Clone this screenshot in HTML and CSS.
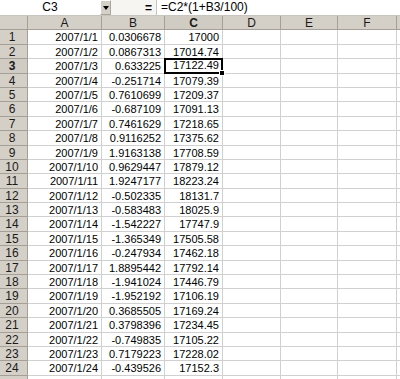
FILE: index.html
```html
<!DOCTYPE html>
<html lang="ja">
<head>
  <meta charset="UTF-8">
  <meta name="viewport" content="width=device-width, initial-scale=1.0">
  <title>Sheet1</title>
  <link rel="stylesheet" href="styles.css">
</head>
<body>
  <div class="formula-bar">
    <div class="name-box">C3</div>
    <div class="name-drop"><span class="arrow"></span></div>
    <div class="fx-gap"><span class="equals">=</span></div>
    <div class="formula">=C2*(1+B3/100)</div>
  </div>

  <div class="sheet" id="sheet">
    <div class="hdr corner"></div>
    <div class="hdr col">A</div>
    <div class="hdr col">B</div>
    <div class="hdr col active">C</div>
    <div class="hdr col">D</div>
    <div class="hdr col">E</div>
    <div class="hdr col">F</div>
    <div class="hdr col"></div>
  </div>

  <script>
    // date, change (%), index
    const rows = [
      ["2007/1/1", "0.0306678", "17000"],
      ["2007/1/2", "0.0867313", "17014.74"],
      ["2007/1/3", "0.633225", "17122.49"],
      ["2007/1/4", "-0.251714", "17079.39"],
      ["2007/1/5", "0.7610699", "17209.37"],
      ["2007/1/6", "-0.687109", "17091.13"],
      ["2007/1/7", "0.7461629", "17218.65"],
      ["2007/1/8", "0.9116252", "17375.62"],
      ["2007/1/9", "1.9163138", "17708.59"],
      ["2007/1/10", "0.9629447", "17879.12"],
      ["2007/1/11", "1.9247177", "18223.24"],
      ["2007/1/12", "-0.502335", "18131.7"],
      ["2007/1/13", "-0.583483", "18025.9"],
      ["2007/1/14", "-1.542227", "17747.9"],
      ["2007/1/15", "-1.365349", "17505.58"],
      ["2007/1/16", "-0.247934", "17462.18"],
      ["2007/1/17", "1.8895442", "17792.14"],
      ["2007/1/18", "-1.941024", "17446.79"],
      ["2007/1/19", "-1.952192", "17106.19"],
      ["2007/1/20", "0.3685505", "17169.24"],
      ["2007/1/21", "0.3798396", "17234.45"],
      ["2007/1/22", "-0.749835", "17105.22"],
      ["2007/1/23", "0.7179223", "17228.02"],
      ["2007/1/24", "-0.439526", "17152.3"]
    ];

    const sheet = document.getElementById("sheet");

    function addRow(label, values, rowIndex) {
      const head = document.createElement("div");
      head.className = "hdr row" + (rowIndex === 2 ? " active" : "");
      head.textContent = label;
      sheet.appendChild(head);

      values.concat(["", "", "", ""]).forEach(function (value, j) {
        const cell = document.createElement("div");
        cell.className = "cell";
        if (rowIndex === 2 && j === 2) cell.className += " selected";
        cell.textContent = value;
        sheet.appendChild(cell);
      });
    }

    rows.forEach(function (row, i) {
      addRow(i + 1, row, i);
    });

    // row 25 is only partly in view
    addRow("", ["", "", ""], 24);
  </script>
</body>
</html>
```

FILE: styles.css
```css
/* General styles */
body {
  margin: 0;
  padding: 0;
  font-family: "Liberation Sans", Arial, sans-serif;
  font-size: 11px;
  color: #000000;
  background: #ffffff;
  overflow: hidden;
}

/* Formula bar */
.formula-bar {
  display: flex;
  height: 15px;
  border-bottom: 1px solid #c8c5be;
  background: #f6f5f2;
}

.name-box {
  width: 100px;
  box-sizing: border-box;
  background: #ffffff;
  text-align: center;
  line-height: 15px;
  font-size: 12px;
}

.name-drop {
  width: 11px;
  box-sizing: border-box;
  background: #d4d0c8;
  border: 1px solid #a9a59d;
  border-top-color: #ffffff;
  border-left-color: #ffffff;
  display: flex;
  align-items: center;
  justify-content: center;
}

.arrow {
  width: 0;
  height: 0;
  border-left: 3px solid transparent;
  border-right: 3px solid transparent;
  border-top: 4px solid #000000;
}

.fx-gap {
  width: 46px;
  box-sizing: border-box;
  border-right: 1px solid #c8c5be;
  display: flex;
  justify-content: flex-end;
  align-items: center;
  padding-right: 4px;
}

.equals {
  font-size: 12px;
  font-weight: bold;
}

.formula {
  flex: 1;
  background: #ffffff;
  padding-left: 4px;
  line-height: 15px;
  font-size: 12px;
}

/* Grid */
.sheet {
  display: grid;
  grid-template-columns: 28px 74px 63px 58px 58px 57px 59px 20px;
  grid-auto-rows: 14.4px;
}

.hdr {
  background: #d4d0c8;
  border-right: 1px solid #a4a098;
  border-bottom: 1px solid #a4a098;
  box-sizing: border-box;
  text-align: center;
  line-height: 14px;
  font-size: 12px;
  color: #1a1a1a;
}

.hdr.row {
  padding-right: 3px;
}

.hdr.active {
  font-weight: bold;
  background: #d0ccc4;
}

.cell {
  border-right: 1px solid #d0d0d0;
  border-bottom: 1px solid #d0d0d0;
  box-sizing: border-box;
  text-align: right;
  padding: 0 3px;
  line-height: 14px;
  white-space: nowrap;
  overflow: hidden;
}

.cell.selected {
  position: relative;
  overflow: visible;
  border: 2px solid #000000;
  margin: -1px 0 0 -1px;
  padding: 0 2px;
  line-height: 11px;
}

.cell.selected::after {
  content: "";
  position: absolute;
  right: -4px;
  bottom: -4px;
  width: 4px;
  height: 4px;
  background: #000000;
  border: 1px solid #ffffff;
}
```
